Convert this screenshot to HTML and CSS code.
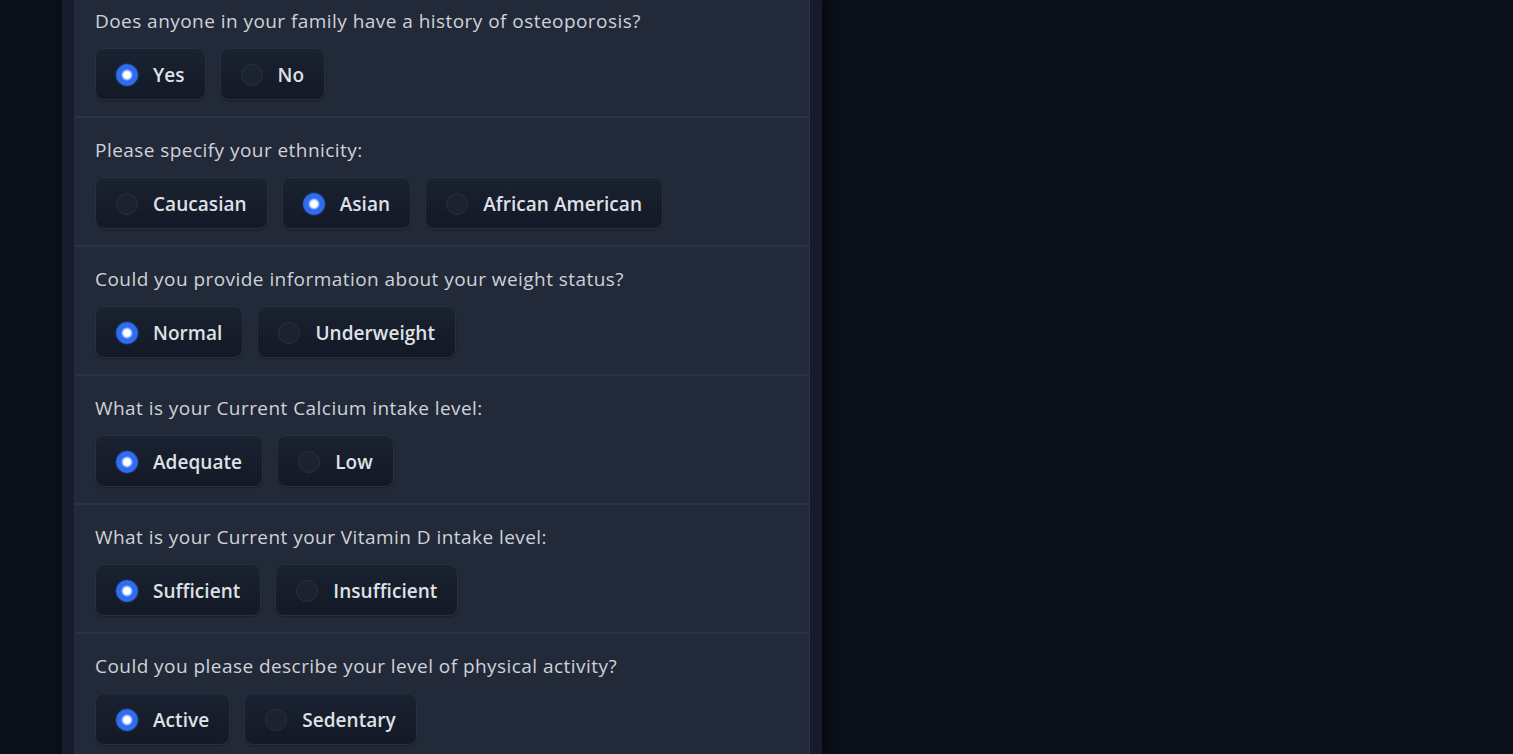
FILE: index.html
```html
<!DOCTYPE html>
<html>
<head>
<meta charset="utf-8">
<link rel="stylesheet" href="styles.css">
</head>
<body>
<div class="page">
  <div class="column">
    <div class="form">
      <div class="block">
        <div class="label">Does anyone in your family have a history of osteoporosis?</div>
        <div class="options">
          <label class="opt"><span class="radio on"></span><span>Yes</span></label>
          <label class="opt"><span class="radio"></span><span>No</span></label>
        </div>
      </div>
      <div class="block">
        <div class="label">Please specify your ethnicity:</div>
        <div class="options">
          <label class="opt"><span class="radio"></span><span>Caucasian</span></label>
          <label class="opt"><span class="radio on"></span><span>Asian</span></label>
          <label class="opt"><span class="radio"></span><span>African American</span></label>
        </div>
      </div>
      <div class="block">
        <div class="label">Could you provide information about your weight status?</div>
        <div class="options">
          <label class="opt"><span class="radio on"></span><span>Normal</span></label>
          <label class="opt"><span class="radio"></span><span>Underweight</span></label>
        </div>
      </div>
      <div class="block">
        <div class="label">What is your Current Calcium intake level:</div>
        <div class="options">
          <label class="opt"><span class="radio on"></span><span>Adequate</span></label>
          <label class="opt"><span class="radio"></span><span>Low</span></label>
        </div>
      </div>
      <div class="block">
        <div class="label">What is your Current your Vitamin D intake level:</div>
        <div class="options">
          <label class="opt"><span class="radio on"></span><span>Sufficient</span></label>
          <label class="opt"><span class="radio"></span><span>Insufficient</span></label>
        </div>
      </div>
      <div class="block">
        <div class="label">Could you please describe your level of physical activity?</div>
        <div class="options">
          <label class="opt"><span class="radio on"></span><span>Active</span></label>
          <label class="opt"><span class="radio"></span><span>Sedentary</span></label>
        </div>
      </div>
    </div>
  </div>
</div>
</body>
</html>
```

FILE: styles.css
```css
html, body {
  margin: 0;
  padding: 0;
  background: #0b0f19;
  height: 100%;
  overflow: hidden;
}
body {
  font-family: "Open Sans", "Noto Sans", sans-serif;
  color: #d4d7dd;
}
.page {
  padding-left: 62px;
  width: 760px;
  height: 100%;
}
.column {
  display: flow-root;
  background: #161c2b;
  padding: 0 12px;
  height: 100%;
  box-shadow: 6px 0 10px rgba(0,0,0,0.35);
}
.form {
  background: #222a39;
  border-left: 1px solid #283142;
  border-right: 1px solid #2c3546;
  margin-top: -13px;
  min-height: 800px;
}
.block {
  border-top: 2px solid #2b3445;
  padding: 20px 20px 16px;
}
.label {
  font-size: 19px;
  line-height: 24px;
  letter-spacing: 0.45px;
  color: #cfd2d8;
  margin-bottom: 15px;
}
.options {
  display: flex;
  gap: 14px;
}
.opt {
  box-sizing: border-box;
  display: flex;
  align-items: center;
  gap: 15px;
  height: 52px;
  padding: 2px 20px 0 20px;
  background: linear-gradient(#1a2130, #131926);
  border: 1px solid #283142;
  border-radius: 9px;
  font-size: 19px;
  font-weight: 600;
  letter-spacing: 0.05px;
  line-height: 1;
  color: #dfe1e6;
  box-shadow: 0 1px 2px rgba(0,0,0,0.3);
}
.radio {
  width: 22px;
  height: 22px;
  border-radius: 50%;
  background: #1b2231;
  border: 1px solid #283142;
  box-sizing: border-box;
}
.radio.on {
  background: radial-gradient(circle, #ffffff 0 3px, #cfe0ff 4px, #2f6cf0 6px);
  border-color: #2f6cf0;
  box-shadow: 0 0 2px rgba(59,130,246,0.6);
}
```
